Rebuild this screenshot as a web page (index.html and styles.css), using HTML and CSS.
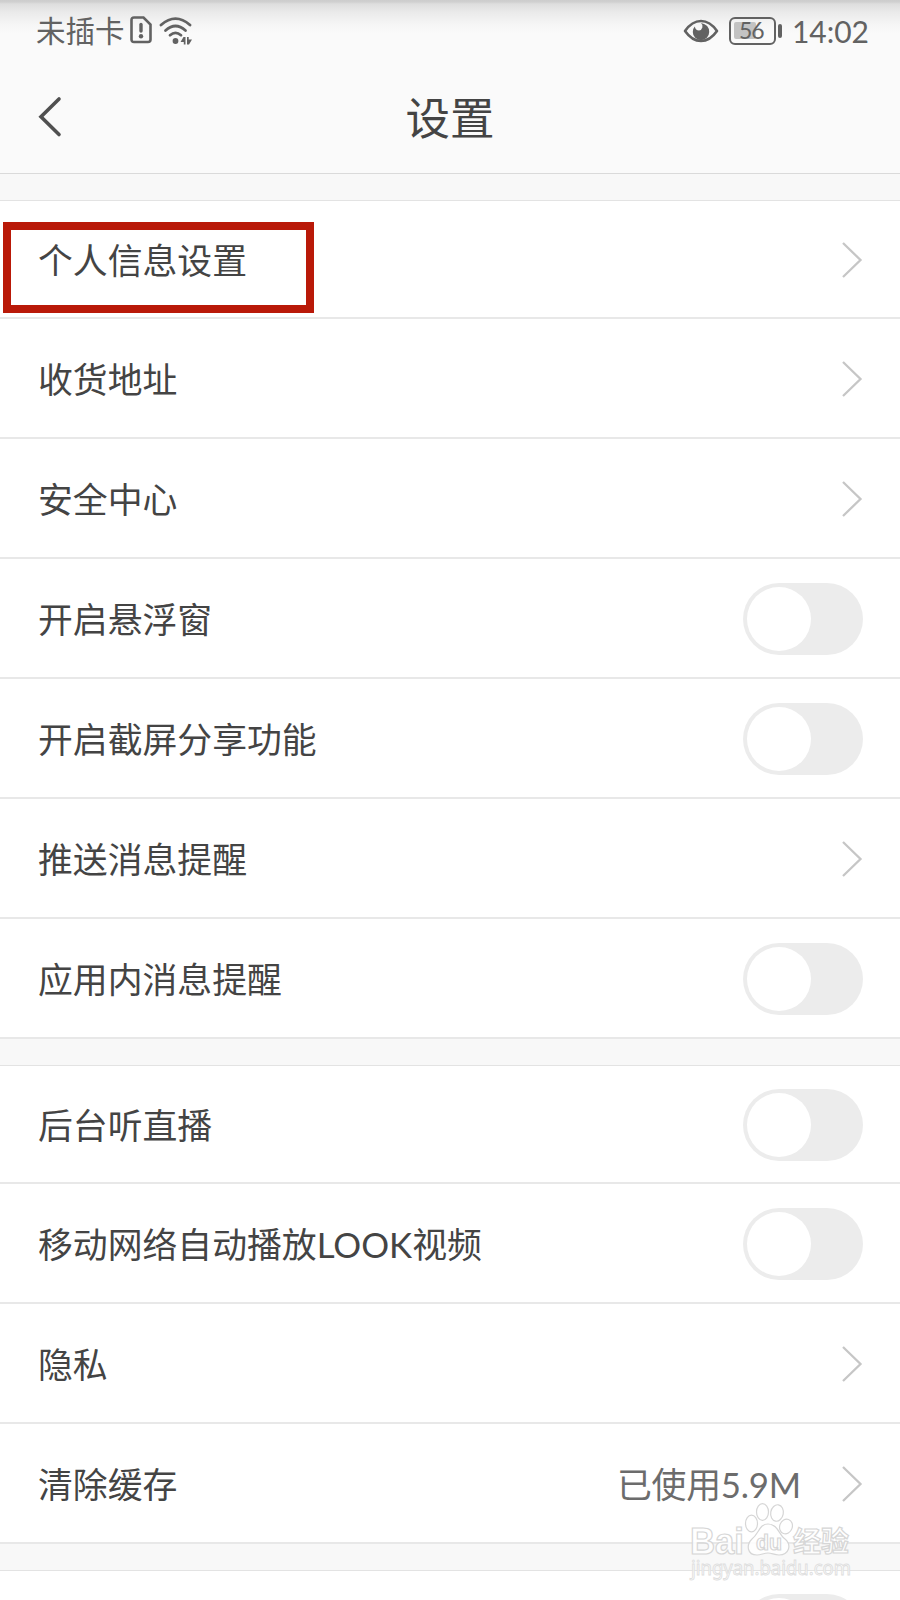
FILE: index.html
```html
<!DOCTYPE html>
<html lang="zh-CN">
<head>
<meta charset="utf-8">
<title>设置</title>
<link rel="stylesheet" href="styles.css">
</head>
<body>
<svg class="defs" width="0" height="0">
  <symbol id="chevron" viewBox="0 0 22 38"><path d="M2 2 L19.5 19 L2 36" fill="none" stroke="#c6c6c6" stroke-width="2.3"/></symbol>
</svg>
<div class="screen">
  <header class="top">
    <div class="status">
      <div class="status-left">
        <span class="carrier">未插卡</span>
        <svg class="sim" width="22" height="28" viewBox="0 0 22 28"><path d="M4 1.5H13.5L20.5 8.5V23.5Q20.5 26 18 26H4Q1.5 26 1.5 23.5V4Q1.5 1.5 4 1.5Z" fill="none" stroke="#626262" stroke-width="2.6"/><path d="M11 8.5V15" stroke="#626262" stroke-width="3.4" stroke-linecap="round"/><circle cx="11" cy="20.3" r="2.2" fill="#626262"/></svg>
        <svg class="wifi" width="34" height="28" viewBox="0 0 34 28"><g fill="none" stroke="#626262" stroke-width="2.8" stroke-linecap="round"><path d="M2 8Q16.500 -4.800 31 8"/><path d="M6.500 13.500Q16.500 4.500 26.500 13.500"/><path d="M11 18.200Q16.500 13.500 22 18.200"/></g><circle cx="16.500" cy="24" r="2.900" fill="#626262"/><path d="M26.500 20V27.500H24.800V25H21.500L24.500 20ZM28 20H29.700V22.500H33L30 27.500H28Z" fill="#626262"/></svg>
      </div>
      <div class="status-right">
        <svg class="eye" width="36" height="26" viewBox="0 0 36 26"><path d="M2 13Q9 3 18 3T34 13Q27 23 18 23T2 13Z" fill="none" stroke="#626262" stroke-width="2.600" stroke-linejoin="round"/><path d="M18 5A4.300 4.300 0 0 1 16 12.500Q12.500 12.500 11.800 8.500Q9.800 10.500 9.800 14A8.200 8.200 0 0 0 26.200 14Q26.200 6.500 18 5Z" fill="#626262"/></svg>
        <div class="battery"><span class="charge">56</span></div>
        <i class="battery-tip"></i>
        <span class="clock">14:02</span>
      </div>
    </div>
    <div class="titlebar">
      <svg class="back" width="24" height="42" viewBox="0 0 24 42"><path d="M21 3L3 20.700L21 38.500" fill="none" stroke="#505050" stroke-width="3.600" stroke-linecap="round"/></svg>
      <h1 class="title">设置</h1>
    </div>
  </header>
  <ul class="group">
    <li class="row"><span class="label marked">个人信息设置</span><svg class="arrow"><use href="#chevron"/></svg></li>
    <li class="row"><span class="label">收货地址</span><svg class="arrow"><use href="#chevron"/></svg></li>
    <li class="row"><span class="label">安全中心</span><svg class="arrow"><use href="#chevron"/></svg></li>
    <li class="row"><span class="label">开启悬浮窗</span><i class="toggle"></i></li>
    <li class="row"><span class="label">开启截屏分享功能</span><i class="toggle"></i></li>
    <li class="row"><span class="label">推送消息提醒</span><svg class="arrow"><use href="#chevron"/></svg></li>
    <li class="row"><span class="label">应用内消息提醒</span><i class="toggle"></i></li>
  </ul>
  <ul class="group">
    <li class="row"><span class="label">后台听直播</span><i class="toggle"></i></li>
    <li class="row"><span class="label">移动网络自动播放LOOK视频</span><i class="toggle"></i></li>
    <li class="row"><span class="label">隐私</span><svg class="arrow"><use href="#chevron"/></svg></li>
    <li class="row"><span class="label">清除缓存</span><span class="value">已使用5.9M</span><svg class="arrow"><use href="#chevron"/></svg></li>
  </ul>
  <ul class="group">
    <li class="row"><span class="label"></span><i class="toggle"></i></li>
  </ul>
  <svg class="watermark" width="180" height="90" viewBox="0 0 180 90">
    <g fill="#fff" fill-opacity=".85" stroke="#d6d6d6" stroke-width="1.200">
      <text class="wm-latin" x="10" y="54" font-size="37" textLength="54" lengthAdjust="spacingAndGlyphs">Bai</text>
      <ellipse cx="71.500" cy="23.500" rx="6" ry="8.300"/>
      <ellipse cx="82.500" cy="12" rx="6" ry="8.300"/>
      <ellipse cx="97" cy="13" rx="6.300" ry="8.300" transform="rotate(10 97 13)"/>
      <ellipse cx="106" cy="26.500" rx="6.300" ry="7.500" transform="rotate(20 106 26.500)"/>
      <path d="M88 24C98 24 99 35 105 39C112 45 109 55 99 55C94 55 92 53 88 53C84 53 81 55 77 55C67 55 66 45 72 39C79 34 79 24 88 24Z"/>
      <text class="wm-latin" x="76" y="50" font-size="22" textLength="26" lengthAdjust="spacingAndGlyphs">du</text>
      <text class="wm-cjk" x="113" y="52" font-size="28">经验</text>
      <text class="wm-url" x="11" y="75" font-size="19" stroke="#dedede" stroke-width=".9" textLength="160" lengthAdjust="spacingAndGlyphs">jingyan.baidu.com</text>
    </g>
  </svg>
</div>
</body>
</html>
```
FILE: styles.css
```css
*, *::before { box-sizing: border-box; }
body { margin: 0; background: #f9f9f9; }
.defs { position: absolute; }
.screen {
  position: relative;
  width: 900px;
  height: 1600px;
  overflow: hidden;
  background: #f8f8f8;
  font-family: Lato, "Noto Sans CJK SC", sans-serif;
  color: #444;
}
.top {
  height: 174px;
  border-bottom: 1px solid #dadada;
  background: linear-gradient(#cdcdcd 0, #d0d0d0 2px, #dedede 4px, #ebebeb 13px, #f5f5f5 24px, #fafafa 34px);
}
.status {
  display: flex;
  justify-content: space-between;
  height: 62px;
  padding: 0 31px 0 36px;
  color: #626262;
}
.status-left, .status-right { display: flex; align-items: center; }
.carrier { font-size: 29.500px; line-height: 62px; }
.sim { margin: -2px 0 0 5px; }
.wifi { margin: 0 0 0 7px; }
.battery {
  width: 47px;
  height: 28px;
  margin-left: 10px;
  padding: 3px;
  border: 2.500px solid #626262;
  border-radius: 6px;
}
.charge {
  display: block;
  width: 22px;
  height: 17px;
  border-radius: 2px;
  background: #c3c3c3;
  font-size: 23px;
  line-height: 17px;
  text-indent: 5px;
  letter-spacing: -1px;
}
.battery-tip { width: 4px; height: 14px; margin-left: 2px; border-radius: 2px; background: #626262; }
.clock { margin: 0 0 1px 10px; font-size: 30px; line-height: 60px; }
.titlebar { position: relative; display: flex; align-items: center; justify-content: center; height: 111px; }
.back { position: absolute; left: 38px; top: 34px; }
.title { margin: 0; font-size: 44.500px; line-height: 110px; font-weight: 400; }
.group {
  margin: 26px 0 0;
  padding: 0;
  list-style: none;
  border-top: 1px solid #e3e3e3;
  background: #fff;
}
.row {
  display: flex;
  align-items: center;
  height: 120px;
  padding: 2px 37px 0 38px;
  border-bottom: 2px solid #e8e8e8;
}
.row:first-child { height: 118px; }
.label { flex: 1; padding-top: 2px; font-size: 34.850px; line-height: 52px; }
.marked { position: relative; }
.marked::before {
  content: "";
  position: absolute;
  left: -35px;
  top: -11px;
  width: 311px;
  height: 91px;
  border: 8px solid #b91908;
}
.value { margin-right: 40px; padding-top: 2px; font-size: 34.850px; line-height: 52px; letter-spacing: -.2px; color: #6c6c6c; }
.arrow { width: 22px; height: 38px; }
.toggle { width: 120px; height: 72px; padding: 4px; border-radius: 36px; background: #ececec; }
.toggle::before { content: ""; display: block; width: 64px; height: 64px; border-radius: 50%; background: #fff; }
.watermark { position: absolute; left: 680px; top: 1500px; }
.wm-latin { font-family: "Liberation Sans", sans-serif; font-weight: 700; }
.wm-cjk { font-family: "Noto Sans CJK SC", sans-serif; font-weight: 700; }
.wm-url { font-family: "Noto Sans", sans-serif; }
```
